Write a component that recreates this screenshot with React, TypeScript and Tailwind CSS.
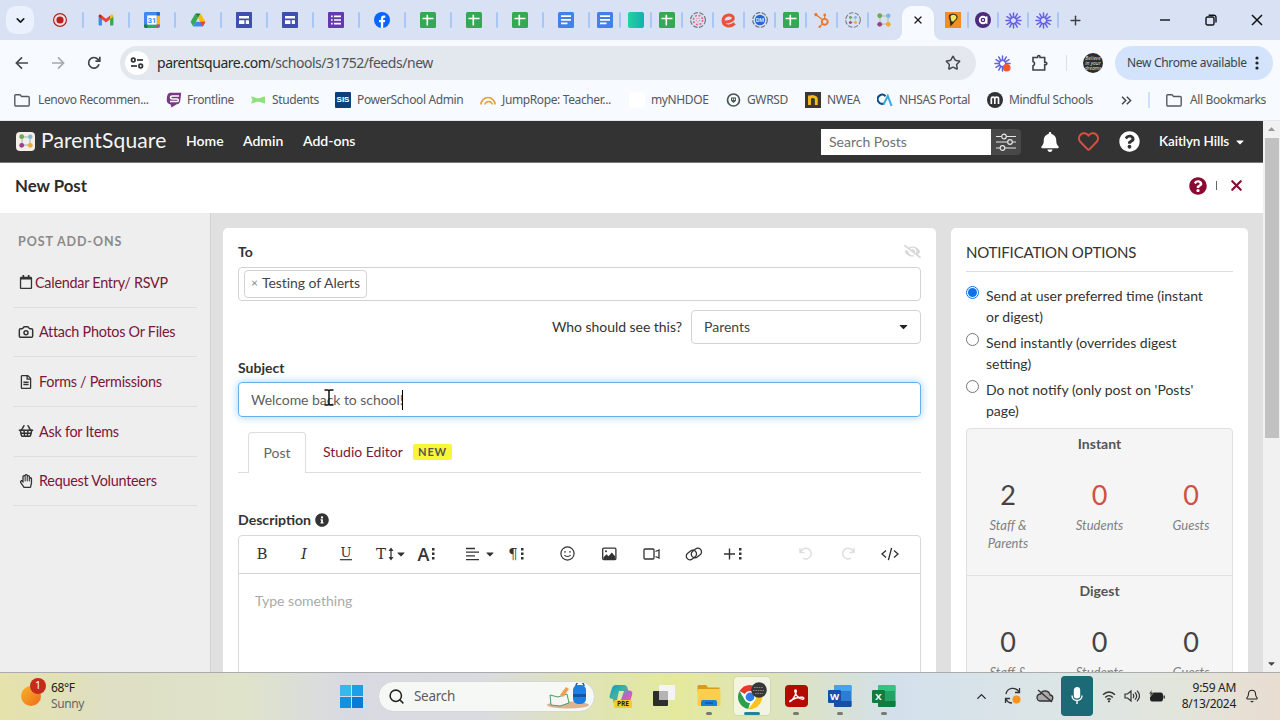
import type { ReactNode } from "react";
import { Bell, Camera, ChevronDown, ChevronUp, Plus, Search, ShoppingBasket, Star, X } from "lucide-react";
import {
  FaBell,
  FaCaretDown,
  FaEyeSlash,
  FaInfoCircle,
  FaQuestionCircle,
  FaRegCalendar,
  FaRegFileAlt,
  FaRegHandPaper,
  FaRegHeart,
} from "react-icons/fa";
import { SiHubspot } from "react-icons/si";

const segoe = "font-['Noto_Sans','Open_Sans',sans-serif]";
const proxima = "font-['Lato','Open_Sans',sans-serif]";

/* ---------- Favicons ---------- */

const Sheets = () => (
  <svg width="16" height="16" viewBox="0 0 16 16">
    <rect width="16" height="16" rx="1.5" fill="#34a853" />
    <path d="M2.5 6.5h11M7.3 2.8v10.6" stroke="#fff" strokeWidth="1.6" />
  </svg>
);

const Docs = () => (
  <svg width="16" height="16" viewBox="0 0 16 16">
    <rect width="16" height="16" rx="1.5" fill="#4381ea" />
    <path d="M3 4.2h10M3 7.8h10M3 11.4h6.5" stroke="#fff" strokeWidth="1.7" />
  </svg>
);

const Sites = () => (
  <svg width="16" height="16" viewBox="0 0 16 16">
    <rect width="16" height="16" rx="1" fill="#3f4fae" />
    <path d="M3 4h10v2.6H3zM3 8.2h5.4V12H3zM9.8 8.2H13V12H9.8z" fill="#fff" />
  </svg>
);

const Forms = () => (
  <svg width="16" height="16" viewBox="0 0 16 16">
    <rect width="16" height="16" rx="1" fill="#6638b0" />
    <path d="M6 4.4h7M6 8h7M6 11.6h7" stroke="#fff" strokeWidth="1.7" />
    <path d="M3 4.4h1.7M3 8h1.7M3 11.6h1.7" stroke="#fff" strokeWidth="1.7" />
  </svg>
);

const Record = () => (
  <svg width="16" height="16" viewBox="0 0 16 16">
    <circle cx="8" cy="8" r="6.4" fill="#f3dfe4" stroke="#b3261e" strokeWidth="1.2" />
    <circle cx="8" cy="8" r="3.6" fill="#b81f1f" />
  </svg>
);

const Gmail = () => (
  <svg width="16" height="16" viewBox="0 0 16 16">
    <path d="M.6 4.2v8.3c0 .6.4 1 1 1h2.3V7z" fill="#4285f4" />
    <path d="M15.4 4.2v8.3c0 .6-.4 1-1 1h-2.3V7z" fill="#34a853" />
    <path d="M.6 4.6 3.9 7.2V3.6l-.9-.7C1.9 2.1.6 2.9.6 4.2z" fill="#c5221f" />
    <path d="M15.4 4.6 12.1 7.2V3.6l.9-.7c1.1-.8 2.4 0 2.4 1.3z" fill="#fbbc04" />
    <path d="M3.9 3.6 8 6.7l4.1-3.1v3.7L8 10.4 3.9 7.3z" fill="#ea4335" />
  </svg>
);

const GoogleCalendar = () => (
  <svg width="16" height="16" viewBox="0 0 16 16">
    <rect width="16" height="16" rx="1.4" fill="#4285f4" />
    <path d="M12.6 3.4H16v9.2h-3.4z" fill="#fbbc04" />
    <path d="M12.6 0H14.6A1.4 1.4 0 0 1 16 1.4v2h-3.4z" fill="#1967d2" />
    <path d="M3.4 12.6h9.2V16H3.4z" fill="#34a853" />
    <path d="M0 12.6h3.4V16h-2A1.4 1.4 0 0 1 0 14.6z" fill="#188038" />
    <path d="M12.6 16v-3.4H16z" fill="#ea4335" />
    <rect x="3.2" y="3.4" width="9.4" height="9.2" fill="#fff" />
    <text x="8" y="10.9" textAnchor="middle" fontSize="7.5" fontWeight="700" fill="#4285f4" fontFamily="Roboto, sans-serif">
      31
    </text>
  </svg>
);

const Drive = () => (
  <svg width="16" height="16" viewBox="0 0 16 16">
    <path d="M5.4 1.4h5.2L8 5.9z" fill="#188038" />
    <path d="M5.4 1.4 8 5.9 3.2 14.4.6 9.8z" fill="#34a853" />
    <path d="M10.6 1.4 15.4 9.8h-5.2L8 5.9z" fill="#fbbc04" />
    <path d="M5.8 9.8h9.6l-2.6 4.6H3.2z" fill="#4285f4" />
    <path d="M10.2 9.8h5.2l-2.6 4.6z" fill="#ea4335" />
  </svg>
);

const Facebook = () => (
  <svg width="16" height="16" viewBox="0 0 16 16">
    <circle cx="8" cy="8" r="8" fill="#0866ff" />
    <path d="M6.9 15.9V10.3H5V8h1.9V6.7c0-2.2 1-3.2 3-3.2.5 0 1.1.1 1.4.2v2h-.9c-.9 0-1.2.4-1.2 1.2V8h2l-.4 2.3H9.2v5.5z" fill="#fff" />
  </svg>
);

const Teal = () => <span className="size-4 rounded-[2px] bg-linear-to-r from-[#25d0a0] to-[#14b0ae]" />;

const Canvas = () => (
  <svg width="16" height="16" viewBox="0 0 16 16" fill="none">
    <circle cx="8" cy="8" r="7.4" stroke="#70747c" strokeWidth="1.2" strokeDasharray="4.5 1.5" />
    <circle cx="8" cy="8" r="4.6" stroke="#e0687c" strokeWidth="1.6" strokeDasharray="2 1.6" />
    <circle cx="8" cy="8" r="1.8" stroke="#e58a98" strokeWidth="1.2" strokeDasharray="1 1" />
  </svg>
);

const Eduphoria = () => (
  <svg width="16" height="16" viewBox="0 0 16 16" fill="none">
    <path d="M2.5 9.8c5 .6 9.8-1 9.8-3.8 0-4-9.5-4.8-10.2 2.5-.4 5.8 7 7 11.6 3" stroke="#e8543a" strokeWidth="3" />
  </svg>
);

const BlueDm = () => (
  <svg width="16" height="16" viewBox="0 0 16 16">
    <circle cx="8" cy="8" r="7.3" fill="none" stroke="#6b7280" strokeWidth="1.2" strokeDasharray="4.5 1.5" />
    <circle cx="8" cy="8" r="5.2" fill="#2766d8" />
    <text x="8" y="10" textAnchor="middle" fontSize="5.5" fontWeight="700" fill="#cfe0ff" fontFamily="Roboto, sans-serif">
      DM
    </text>
  </svg>
);

const SquareDots = ({ ring = false, size = 16 }: { ring?: boolean; size?: number }) => (
  <svg width={size} height={size} viewBox="0 0 16 16">
    {ring && <circle cx="8" cy="8" r="7.3" fill="none" stroke="#777b82" strokeWidth="1.1" strokeDasharray="4.5 1.5" />}
    <g transform={ring ? "translate(3.2 3.2) scale(.6)" : "translate(0 0)"}>
      <path d="M4 4h8v8H4z" fill="none" stroke="#b8c7c4" strokeWidth="1.5" />
      <circle cx="3.7" cy="3.7" r="2.4" fill="#6ea84f" />
      <circle cx="12.3" cy="3.7" r="2.2" fill="#7eb6d9" />
      <circle cx="3.7" cy="12.3" r="2.4" fill="#9c3f86" />
      <circle cx="12.3" cy="12.3" r="2.4" fill="#efac2c" />
    </g>
  </svg>
);

const Bulb = () => (
  <svg width="16" height="16" viewBox="0 0 16 16">
    <rect width="16" height="16" fill="#ef8e22" />
    <path d="M4.5 2.5C8 .8 13 2 12.6 5.8 12.3 8 9.5 8.7 8.7 11L5.5 14.5 5 11C5.5 8 2.5 5 4.5 2.5z" fill="#33321c" />
    <path d="M6 3.4c2.5-1.2 5.6-.4 5.400 2.400C11.200 7.700 9 8 8.200 9.800L6.300 9C6.500 7 4.600 5 6 3.400z" fill="#f0e36a" />
  </svg>
);

const PurpleA = () => (
  <svg width="16" height="16" viewBox="0 0 16 16" fill="none">
    <circle cx="8" cy="8" r="8" fill="#4c2a7c" />
    <circle cx="8" cy="8" r="3.3" stroke="#fff" strokeWidth="1.9" />
    <path d="M11.6 4.4v7.4" stroke="#fff" strokeWidth="1.8" />
    <circle cx="8" cy="8" r="1" fill="#fff" />
  </svg>
);

const Loom = ({ dot = false }: { dot?: boolean }) => (
  <svg width="17" height="17" viewBox="0 0 16 16" fill="none">
    <g stroke="#6560e4" strokeWidth="1.4" strokeLinecap="round">
      {[0, 30, 60, 90, 120, 150, 180, 210, 240, 270, 300, 330].map((a) => (
        <path key={a} d="M8 4.8V.9" transform={`rotate(${a} 8 8)`} />
      ))}
    </g>
    <circle cx="8" cy="8" r="3" stroke="#6560e4" strokeWidth="1.3" />
    {dot && <circle cx="12" cy="12" r="3.6" fill="#f8542f" />}
  </svg>
);

/* ---------- Browser tabs ---------- */

const pinnedTabs: ReactNode[] = [
  <Record />, <Gmail />, <GoogleCalendar />, <Drive />, <Sites />, <Sites />,
  <Forms />, <Facebook />, <Sheets />, <Sheets />, <Sheets />, <Docs />,
];

const narrowTabs: ReactNode[] = [
  <Docs />, <Teal />, <Sheets />, <Canvas />, <Eduphoria />, <BlueDm />, <Sheets />,
  <SiHubspot size={15} color="#e5792f" />, <SquareDots ring />, <SquareDots />,
];

const trailingTabs: ReactNode[] = [<Bulb />, <PurpleA />, <Loom />, <Loom />];

function Tab({ width, divider = true, children }: { width: string; divider?: boolean; children: ReactNode }) {
  return (
    <div className={`relative flex h-full shrink-0 items-center justify-center ${width}`}>
      {children}
      {divider && <span className="absolute -right-px top-3 h-4 w-[2px] rounded bg-[#a9c7f6]" />}
    </div>
  );
}

function TabStrip() {
  return (
    <div className="flex h-10 items-center bg-[#d8e2f4] text-[#1c1c1e]">
      <div className="ml-[6px] mr-[3px] flex size-7 items-center justify-center rounded-[10px] bg-[#eaf0fc]">
        <ChevronDown size={13} strokeWidth={3} />
      </div>
      {pinnedTabs.map((icon, i) => (
        <Tab key={i} width="w-[46px]">{icon}</Tab>
      ))}
      {narrowTabs.map((icon, i) => (
        <Tab key={i} width="w-[31px]" divider={i < narrowTabs.length - 1}>{icon}</Tab>
      ))}
      <div className="relative ml-[3px] mr-1 flex h-[34px] w-8 items-center justify-center self-end rounded-t-[10px] bg-[#f7fafe]">
        <X size={12} strokeWidth={2.6} className="-mt-[6px]" />
        <svg className="absolute -left-2 bottom-0" width="8" height="8"><path d="M8 0v8H0a8 8 0 0 0 8-8z" fill="#f7fafe" /></svg>
        <svg className="absolute -right-2 bottom-0" width="8" height="8"><path d="M0 0v8h8a8 8 0 0 1-8-8z" fill="#f7fafe" /></svg>
      </div>
      {trailingTabs.map((icon, i) => (
        <Tab key={i} width="w-[30px]">{icon}</Tab>
      ))}
      <Plus size={15} strokeWidth={2.3} className="ml-[10px] text-[#3c3f45]" />
      <div className="ml-auto mr-[17px] flex items-center">
        <svg width="12" height="12"><path d="M1 6h10" stroke="#111" strokeWidth="1.4" /></svg>
        <svg className="ml-[34px]" width="12" height="12" fill="none" stroke="#111" strokeWidth="1.4">
          <rect x="1" y="3" width="8" height="8" rx="1.6" />
          <path d="M3.6 1.2h5.2a2.2 2.2 0 0 1 2.2 2.2v5" />
        </svg>
        <svg className="ml-[34px]" width="12" height="12"><path d="m1 1 10 10M11 1 1 11" stroke="#111" strokeWidth="1.5" /></svg>
      </div>
    </div>
  );
}

/* ---------- Address bar ---------- */

function Toolbar() {
  return (
    <div className="flex h-10 items-start bg-[#f7fafe] pt-[6px]">
      <div className="flex h-[34px] w-[120px] shrink-0 items-center pl-[15px]">
        <svg width="14" height="14" fill="none" stroke="#45484c" strokeWidth="1.7"><path d="M13 7H1.6M7 1.4 1.4 7 7 12.6" /></svg>
        <svg className="ml-[22px]" width="14" height="14" fill="none" stroke="#a5a8ac" strokeWidth="1.6"><path d="M1 7h11.4M7 1.4 12.6 7 7 12.6" /></svg>
        <svg className="ml-[22px]" width="14" height="14" fill="none" stroke="#3f4246" strokeWidth="1.7">
          <path d="M12 8.3A5.3 5.3 0 1 1 11 3.4L12.6 5" />
          <path d="M12.8.8v4.4H8.4" />
        </svg>
      </div>
      <div className="flex h-[34px] w-[856px] shrink-0 items-center rounded-full bg-[#e3e8ee] pl-[5px]">
        <span className="flex size-6 items-center justify-center rounded-full bg-white">
          <svg width="14" height="12" fill="none" stroke="#303236" strokeWidth="1.7">
            <circle cx="3.3" cy="3" r="1.8" /><path d="M7 3h6" />
            <circle cx="10.7" cy="9" r="1.8" /><path d="M1 9h6" />
          </svg>
        </span>
        <span className="-mt-[2px] ml-2 text-[14px] tracking-[-0.46px] text-[#505357]">
          <span className="text-[#26282b]">parentsquare.com</span>/schools/31752/feeds/new
        </span>
        <Star size={16} strokeWidth={2.2} className="ml-auto mr-[15px] text-[#45484c]" />
      </div>
      <div className="flex h-[34px] items-center">
        <span className="ml-[18px]"><Loom dot /></span>
        <svg className="ml-[20px]" width="18" height="18" fill="none" stroke="#3f4246" strokeWidth="1.6">
          <path d="M2 3.5h4.6V2.7a1.2 1.2 0 0 1 2.4 0v.8h4.7v4.7h.9a1.2 1.2 0 0 1 0 2.4h-.9V16H2v-4.2a2.2 2.2 0 0 0 0-4.2z" />
        </svg>
        <span className="ml-[17px] h-4 w-px bg-[#d7e3f5]" />
        <span className="ml-4 flex size-5 flex-col items-center justify-center overflow-hidden rounded-full bg-[#2d2d2d] text-[5px] leading-[5px] text-[#ddd]">
          <i>Believe</i><i>in your</i><i>dreams</i>
        </span>
        <div className="ml-3 flex h-[34px] w-[158px] items-center rounded-full bg-[#d3e3fc] pl-3 text-[12px] tracking-[-0.32px] text-[#3a4250]">
          <span className="whitespace-nowrap">New Chrome available</span>
          <svg className="ml-auto mr-[14px]" width="4" height="14" fill="#1f2328">
            <circle cx="2" cy="2" r="1.6" /><circle cx="2" cy="7" r="1.6" /><circle cx="2" cy="12" r="1.6" />
          </svg>
        </div>
      </div>
    </div>
  );
}

/* ---------- Bookmarks ---------- */

const FolderOutline = () => (
  <svg width="16" height="13" viewBox="0 0 16 13" fill="none" stroke="#56595d" strokeWidth="1.4">
    <path d="M.8 11V1.8a1 1 0 0 1 1-1H6l1.6 1.7h6.6a1 1 0 0 1 1 1V11a1 1 0 0 1-1 1H1.8a1 1 0 0 1-1-1z" />
  </svg>
);

const bookmarks: { label: string; width: string; icon: ReactNode }[] = [
  { label: "Lenovo Recommen...", width: "w-[152px] gap-2", icon: <FolderOutline /> },
  {
    label: "Frontline",
    width: "w-[84px] gap-[5px]",
    icon: (
      <svg width="16" height="16" viewBox="0 0 16 16">
        <path d="M4 .8h11.2L14.2 9c-.3 2-1.5 3-3.4 3.3L5.5 15.5 4.6 12.5C1.5 12 .5 10 .8 7 1 3 2 1 4 .8z" fill="#7a3a83" />
        <path d="M13 4H6.5c-2.6 0-2.6 3 0 3H11c2 0 1.8 2.6-.4 2.6H4" stroke="#fff" strokeWidth="1.5" fill="none" />
      </svg>
    ),
  },
  {
    label: "Students",
    width: "w-[85px] gap-[6px]",
    icon: (
      <svg width="16" height="16" viewBox="0 0 16 16">
        <path d="M1 4.5c3 .2 4 1.7 7 1.7s4-1.5 7-1.7v7c-3-.2-4-1.7-7-1.7s-4 1.5-7 1.7l1.5-3.5z" fill="#8de07c" />
      </svg>
    ),
  },
  {
    label: "PowerSchool Admin",
    width: "w-[145px] gap-[6px]",
    icon: <span className="flex size-4 items-center justify-center rounded-[1px] bg-[#0d4078] font-['Liberation_Sans',sans-serif] text-[8px] font-bold tracking-normal text-white">SIS</span>,
  },
  {
    label: "JumpRope: Teacher...",
    width: "w-[149px] gap-[6px]",
    icon: (
      <svg width="16" height="16" viewBox="0 0 16 16" fill="none" stroke="#e3a13c">
        <path d="M1 12.5a7 7 0 0 1 14 0" strokeWidth="1.7" /><path d="M4.5 12.5c2-4 6.5-4 8 0" strokeWidth="1.3" />
      </svg>
    ),
  },
  { label: "myNHDOE", width: "w-[97px] gap-[6px]", icon: <span className="size-4 rounded bg-white" /> },
  {
    label: "GWRSD",
    width: "w-[79px] gap-[6px]",
    icon: (
      <svg width="15" height="16" viewBox="0 0 15 16" fill="none">
        <circle cx="7.5" cy="8" r="6" stroke="#46574f" strokeWidth="1.7" />
        <path d="M5 5.5h5v3.3L7.5 11 5 8.800z" fill="#46574f" /><circle cx="6.6" cy="7.3" r=".7" fill="#fff" /><circle cx="8.5" cy="7.3" r=".7" fill="#fff" />
      </svg>
    ),
  },
  {
    label: "NWEA",
    width: "w-[72px] gap-[6px]",
    icon: (
      <svg width="16" height="16" viewBox="0 0 16 16">
        <rect width="16" height="16" fill="#3a3733" />
        <path d="M4.5 13V3.5M4.5 6.5c1-2.8 6.8-2.6 6.8 1V13" stroke="#f5b91e" strokeWidth="2.9" fill="none" />
      </svg>
    ),
  },
  {
    label: "NHSAS Portal",
    width: "w-[110px] gap-[6px]",
    icon: (
      <svg width="16" height="16" viewBox="0 0 16 16" fill="none" strokeWidth="2">
        <path d="M8.5 4.2A4.5 4.5 0 1 0 7 11.4" stroke="#0c4c86" /><path d="M6.5 12.5 10.8 4l3.8 10" stroke="#38a9dc" />
      </svg>
    ),
  },
  {
    label: "Mindful Schools",
    width: "w-[134px] gap-[6px]",
    icon: (
      <svg width="16" height="16" viewBox="0 0 16 16" fill="none">
        <circle cx="8" cy="8" r="8" fill="#313235" />
        <path d="M4.3 12V6.5c0-1.8 3.5-1.8 3.5 0V12m0-5.5c0-1.8 3.7-1.8 3.7 0V12" stroke="#fff" strokeWidth="1.7" />
      </svg>
    ),
  },
];

function BookmarksBar() {
  return (
    <div className="flex h-[41px] items-center border-b border-[#e4e8ec] bg-[#f7fafe] pl-[14px] text-[12px] tracking-[-0.38px] text-[#55585c]">
      {bookmarks.map((b) => (
        <div key={b.label} className={`flex shrink-0 items-center whitespace-nowrap ${b.width}`}>
          {b.icon}
          <span>{b.label}</span>
        </div>
      ))}
      <svg width="11" height="9" fill="none" stroke="#45484c" strokeWidth="1.5"><path d="m1 .8 3.8 3.7L1 8.2M5.8.8l3.800 3.700-3.800 3.700" /></svg>
      <span className="ml-[16px] h-4 w-[2px] bg-[#d0e0fa]" />
      <div className="ml-4 flex items-center gap-2 whitespace-nowrap"><FolderOutline /><span>All Bookmarks</span></div>
    </div>
  );
}

/* ---------- ParentSquare header ---------- */

function SiteHeader() {
  return (
    <div className="flex h-[42px] shrink-0 items-center border-b border-[#777] bg-[#333] text-white">
      <span className="-mt-px ml-4 flex size-[19px] items-center justify-center rounded-[4px] bg-[#f4efe8]"><SquareDots size={16} /></span>
      <span className="-mt-[3px] ml-[6px] w-[127px] whitespace-nowrap text-[21px] tracking-[0.15px] text-[#f5f5f5]">ParentSquare</span>
      <nav className="-mt-[2px] ml-[18px] flex items-center text-[14px] font-semibold">
        <span className="w-[57px]">Home</span>
        <span className="w-[60px]">Admin</span>
        <span>Add-ons</span>
      </nav>
      <div className="ml-auto flex h-[26px] w-[200px]">
        <div className="flex w-[170px] items-center bg-white pl-2 text-[14px] text-[#707070]">Search Posts</div>
        <div className="flex w-[30px] items-center justify-center rounded-r bg-[#484848]">
          <svg width="20" height="18" fill="none" stroke="#e6e6e6" strokeWidth="1.2">
            <path d="M0 3.5h5.5M10.5 3.5H20M0 9h11.5M16.5 9H20M0 15h4M9 15h11" />
            <circle cx="8" cy="3.5" r="2.3" /><circle cx="14" cy="9" r="2.3" /><circle cx="6.5" cy="15" r="2.3" />
          </svg>
        </div>
      </div>
      <FaBell size={20} className="ml-[19px]" />
      <FaRegHeart size={21} className="ml-[18px] text-[#d9503f]" />
      <FaQuestionCircle size={21} className="ml-[20px]" />
      <span className="-mt-px ml-[19px] w-[71px] whitespace-nowrap text-[13.5px] font-semibold tracking-[-0.1px]">Kaitlyn Hills</span>
      <FaCaretDown size={12} className="ml-[4px] mr-[17px]" />
    </div>
  );
}

/* ---------- Post form ---------- */

const addOns: { label: string; icon: ReactNode; gap: string }[] = [
  { label: "Calendar Entry/ RSVP", icon: <FaRegCalendar size={14} />, gap: "gap-[2px] pl-[6px]" },
  { label: "Attach Photos Or Files", icon: <Camera size={16} strokeWidth={2.2} />, gap: "gap-[5px] pl-[5px]" },
  { label: "Forms / Permissions", icon: <FaRegFileAlt size={14} className="mx-[1px]" />, gap: "gap-[5px] pl-[5px]" },
  { label: "Ask for Items", icon: <ShoppingBasket size={16} strokeWidth={2.2} />, gap: "gap-[5px] pl-[5px]" },
  { label: "Request Volunteers", icon: <FaRegHandPaper size={14} className="mx-[1px]" />, gap: "gap-[5px] pl-[5px]" },
];

function Sidebar() {
  return (
    <aside className="w-[211px] shrink-0 border-r border-[#d2d2d2] bg-[#eeeeee]">
      <h3 className="ml-[18px] mt-[19px] text-[12.5px] font-bold leading-5 tracking-[0.9px] text-[#8a8a8a]">POST ADD-ONS</h3>
      <ul className="ml-[13px] mt-[6px] w-[184px]">
        {addOns.map((a) => (
          <li key={a.label} className={`flex h-[49.7px] items-center whitespace-nowrap border-b border-[#dfdfdf] text-[14.4px] tracking-[-0.26px] text-[#7b1739] ${a.gap}`}>
            <span className="text-[#333]">{a.icon}</span>
            {a.label}
          </li>
        ))}
      </ul>
    </aside>
  );
}

const Dots = () => (
  <svg width="3" height="14" fill="#333"><path d="M0 1h2.5v2.5H0zM0 5.5h2.5V8H0zM0 10h2.5v2.5H0z" /></svg>
);

/* Slab-serif toolbar glyph, centred in a 14px box */
function Glyph({ char, className = "", italic = false, underline = false }: { char: string; className?: string; italic?: boolean; underline?: boolean }) {
  return (
    <svg width="14" height="16" className={className} overflow="visible">
      <text x="7" y={underline ? 11 : 13} textAnchor="middle" fontSize={underline ? 13 : 15} fontStyle={italic ? "italic" : "normal"} fill="#333" fontFamily="DejaVu Serif, serif">
        {char}
      </text>
      {underline && <path d="M1 13.7h12" stroke="#333" strokeWidth="1.2" />}
    </svg>
  );
}

function EditorToolbar() {
  return (
    <div className="flex h-[38px] items-center border-b border-[#d5d5d5] pb-[2px] text-[#333]">
      <Glyph char="B" className="ml-[16px]" />
      <Glyph char="I" italic className="ml-[28px]" />
      <Glyph char="U" underline className="ml-[28px]" />
      <Glyph char="T" className="ml-[21px]" />
      <svg width="6" height="14"><path d="M3 3v8" stroke="#333" strokeWidth="1.3" /><path d="M3 .5 5.5 4h-5zM3 13.5 5.5 10h-5z" fill="#333" /></svg>
      <FaCaretDown size={12} className="ml-px" />
      <span className="ml-[10px] w-[13px] text-center font-['Open_Sans',sans-serif] text-[18px] font-semibold leading-none">A</span>
      <span className="ml-[2px]"><Dots /></span>
      <svg className="ml-[31px]" width="14" height="14" stroke="#333" strokeWidth="1.3"><path d="M0 1.5h9M0 5.2h13M0 8.9h9M0 12.6h13" /></svg>
      <FaCaretDown size={12} className="ml-[4px]" />
      <Glyph char="¶" className="ml-[10px]" />
      <span className="ml-px"><Dots /></span>
      <svg className="ml-[36px]" width="15" height="15" fill="none" stroke="#333" strokeWidth="1.2">
        <circle cx="7.5" cy="7.5" r="6.6" /><path d="M4.5 9c1.2 2 4.8 2 6 0M5 5v1.8M10 5v1.8" />
      </svg>
      <svg className="ml-[27px]" width="15" height="14">
        <rect x=".7" y="1.2" width="13.2" height="11.4" rx="1" fill="none" stroke="#333" strokeWidth="1.3" />
        <path d="M1.5 12V10.2l3-3 2 2L9.8 5.6 13.3 9.6V12z" fill="#333" /><circle cx="4" cy="4.3" r="1" fill="#333" />
      </svg>
      <svg className="ml-[26px]" width="17" height="14" fill="none" stroke="#333" strokeWidth="1.3">
        <rect x="1" y="2" width="10" height="10" rx="1" /><path d="M12.5 4.5 16 3v8l-3.500-1.500" />
      </svg>
      <svg className="ml-[25px]" width="18" height="14" fill="none" stroke="#333" strokeWidth="1.3">
        <rect x="-5.5" y="-3.7" width="11" height="7.4" rx="3.7" transform="translate(6.4 8) rotate(-38)" />
        <rect x="-5.5" y="-3.7" width="11" height="7.4" rx="3.7" transform="translate(11.4 6) rotate(-38)" />
      </svg>
      <svg className="ml-[21px]" width="12" height="12" stroke="#333" strokeWidth="1.4"><path d="M0 6h11M5.5.5v11" /></svg>
      <span className="ml-[3px]"><Dots /></span>
      <svg className="ml-[57px]" width="14" height="13" fill="none" stroke="#dedede" strokeWidth="1.5"><path d="M1 1v4.5h4.5M1.6 5.2a5.4 5.4 0 1 1 2.4 6" /></svg>
      <svg className="ml-[28px]" width="14" height="13" fill="none" stroke="#dedede" strokeWidth="1.5"><path d="M13 1v4.5H8.5M12.4 5.2a5.4 5.4 0 1 0-2.4 6" /></svg>
      <svg className="ml-[26px]" width="18" height="14" fill="none" stroke="#333" strokeWidth="1.4"><path d="M5 3.5 1 7l4 3.5M13 3.5 17 7l-4 3.5M10.6.8 7.4 13.2" /></svg>
    </div>
  );
}

function PostForm() {
  return (
    <main className="ml-3 mt-[15px] w-[713px] shrink-0 rounded-t-[5px] bg-white px-[15px] text-[14px] text-[#444]">
      <div className="flex h-[39px] items-center justify-between pt-[7px]">
        <label className="text-[14px] font-bold text-[#333]">To</label>
        <FaEyeSlash size={17} className="text-[#d9d9d9]" />
      </div>
      <div className="flex h-[34px] items-center rounded border border-[#d3d3d3] pl-[5px]">
        <span className="flex h-[28px] w-[123px] items-center whitespace-nowrap rounded border border-[#d3d3d3] pb-[3px] pl-[6px] text-[14px] tracking-[-0.05px]">
          <span className="mr-[4px] text-[12px] text-[#888]">×</span>Testing of Alerts
        </span>
      </div>
      <div className="mt-[9px] flex items-center justify-end">
        <span className="mr-[9px] pb-[2px] tracking-[-0.04px] text-[#333]">Who should see this?</span>
        <div className="flex h-[34px] w-[230px] items-center justify-between rounded border border-[#d3d3d3] pb-[2px] pl-3 pr-[10px]">
          Parents
          <FaCaretDown size={13} className="text-[#222]" />
        </div>
      </div>
      <label className="mt-[14px] block text-[14px] font-bold leading-5 text-[#333]">Subject</label>
      <div className="relative mt-[4px] flex h-[35px] items-center rounded border border-[#66afe9] pl-3 tracking-[-0.05px] text-[#606060] shadow-[0_0_8px_rgba(102,175,233,0.6)]">
        Welcome back to school!
        <span className="-ml-px h-5 w-px bg-black" />
        <svg className="absolute left-[85px] top-[6px]" width="10" height="17" fill="none" stroke="#111" strokeWidth="1.5">
          <path d="M.5 1H4l1 .8L6 1h3.5M5 1.8v13.4M.5 16H4l1-.8 1 .8h3.5" />
        </svg>
      </div>
      <div className="mt-[15px] flex h-[41px] border-b border-[#ddd] pl-[10px]">
        <div className="flex h-[41px] w-[58px] items-center justify-center rounded-t border border-b-0 border-[#ddd] bg-white pb-[2px] text-[#666]">Post</div>
        <div className="ml-[17px] flex items-center gap-[11px] text-[#7b1739]">
          <span className="w-[79px] whitespace-nowrap pb-px">Studio Editor</span>
          <span className="flex h-4 w-[39px] items-center justify-center rounded-[2px] bg-[#f9f637] text-[11px] font-bold tracking-[0.8px] text-[#555]">NEW</span>
        </div>
      </div>
      <div className="mt-[37px] flex h-5 items-center gap-[4px] text-[#333]">
        <span className="text-[14.1px] font-bold">Description</span>
        <FaInfoCircle size={14} className="-mt-px" />
      </div>
      <div className="mt-[5px] h-40 rounded-t border border-[#d8d8d8]">
        <EditorToolbar />
        <div className="pl-4 pt-[17px] text-[14px] leading-5 text-[#aaa]">Type something</div>
      </div>
    </main>
  );
}

/* ---------- Notification panel ---------- */

const options = [
  { lines: ["Send at user preferred time (instant", "or digest)"], checked: true },
  { lines: ["Send instantly (overrides digest", "setting)"], checked: false },
  { lines: ["Do not notify (only post on 'Posts'", "page)"], checked: false },
];

const groups = [
  { title: "Instant", counts: [{ n: 2, label: "Staff & Parents", zero: false }, { n: 0, label: "Students", zero: true }, { n: 0, label: "Guests", zero: true }] },
  { title: "Digest", counts: [{ n: 0, label: "Staff & Parents", zero: false }, { n: 0, label: "Students", zero: false }, { n: 0, label: "Guests", zero: false }] },
];

function NotificationPanel() {
  return (
    <section className="ml-[15px] mt-[15px] w-[297px] shrink-0 rounded-t-[5px] bg-white px-[15px] pt-[14px] text-[#333]">
      <h2 className="border-b border-[#ddd] pb-[8px] text-[15px] leading-[21px] tracking-[-0.18px]">NOTIFICATION OPTIONS</h2>
      <div className="mt-[13px]">
        {options.map((o) => (
          <div key={o.lines[0]} className="mb-[5px] flex">
            <span className={`mt-px flex size-[13px] shrink-0 items-center justify-center rounded-full border ${o.checked ? "border-[#0d72e8]" : "border-[#777]"}`}>
              {o.checked && <span className="size-[9px] rounded-full bg-[#0d72e8]" />}
            </span>
            <div className="ml-[7px] whitespace-nowrap text-[14px] leading-[21px]">
              {o.lines.map((line) => <div key={line}>{line}</div>)}
            </div>
          </div>
        ))}
      </div>
      <div className="mt-[7px] rounded-t border border-[#e0e0e0] bg-[#f5f5f5] text-[#555]">
        {groups.map((g) => (
          <div key={g.title} className="h-[147px] border-b border-[#e0e0e0] pt-[5px] text-center">
            <div className="text-[14px] font-bold leading-5">{g.title}</div>
            <div className="mt-[24px] flex justify-between px-[10px]">
              {g.counts.map((c) => (
                <div key={c.label} className="w-[62px]">
                  <div className={`text-[27px] leading-[34px] ${c.zero ? "text-[#cf5044]" : "text-[#444]"}`}>{c.n}</div>
                  <div className="mt-[4px] text-[13px] italic leading-[18px] text-[#808080]">{c.label}</div>
                </div>
              ))}
            </div>
          </div>
        ))}
      </div>
    </section>
  );
}

function Page() {
  return (
    <div className={`flex h-[551px] bg-[#f1f1f1] ${proxima}`}>
      <div className="flex w-[1263px] flex-col overflow-hidden">
        <SiteHeader />
        <div className="flex h-[50px] shrink-0 items-center bg-white pb-[5px] pl-[15px] pr-[18px]">
          <h1 className="text-[16.8px] font-bold text-[#2b2b2b]">New Post</h1>
          <FaQuestionCircle size={18} className="ml-auto text-[#8a0a33]" />
          <span className="mx-[9px] h-[9px] w-px bg-[#666]" />
          <X size={17} strokeWidth={3} className="ml-[2px] text-[#8a0a33]" />
        </div>
        <div className="flex min-h-0 flex-1 overflow-hidden bg-[#e0e0e0]">
          <Sidebar />
          <PostForm />
          <NotificationPanel />
        </div>
      </div>
      <div className="flex flex-1 flex-col items-center">
        <FaCaretDown size={11} className="mt-[3px] rotate-180 text-[#999]" />
        <div className="mt-[3px] h-[300px] w-[14px] bg-[#c1c1c1]" />
        <FaCaretDown size={11} className="mb-[3px] mt-auto text-[#444]" />
      </div>
    </div>
  );
}

/* ---------- Taskbar ---------- */

function AppSlot({ running = false, active = false, children }: { running?: boolean; active?: boolean; children: ReactNode }) {
  return (
    <div className={`relative flex h-[38px] w-[36px] items-center justify-center rounded ${active ? "bg-white/60 ring-1 ring-black/5" : ""}`}>
      {children}
      {running && <span className={`absolute h-[3px] rounded-full ${active ? "bottom-0 w-4 bg-[#2a8291]" : "bottom-0 w-[6px] bg-[#777a70]"}`} />}
    </div>
  );
}

function OfficeIcon({ letter, dark, mid, light }: { letter: string; dark: string; mid: string; light: string }) {
  return (
    <svg width="24" height="23" viewBox="0 0 24 23">
      <rect x="6" y="0" width="17.5" height="22" rx="1.5" fill={mid} />
      <path d="M7.5 0H22a1.5 1.5 0 0 1 1.5 1.5V6H6V1.5A1.5 1.5 0 0 1 7.5 0z" fill={light} />
      <path d="M6 16h17.5v4.5A1.5 1.5 0 0 1 22 22H7.5A1.5 1.5 0 0 1 6 20.5z" fill={dark} />
      <rect x="0" y="5" width="13" height="13" rx="1.3" fill={dark} />
      <text x="6.5" y="15" textAnchor="middle" fontSize="9.5" fontWeight="700" fill="#fff" fontFamily="Open Sans, sans-serif">{letter}</text>
    </svg>
  );
}

function Taskbar() {
  return (
    <div className="flex h-12 items-center border-t border-[#a9abad] bg-[linear-gradient(90deg,#e6e2ab_0%,#dedfc5_9%,#dfe3ca_19%,#d8dae2_27%,#dadbe0_38%,#dfe4b4_46%,#e4e99d_53%,#dde3be_61%,#d3e0ec_70%,#dce5e6_82%,#e2e5db_92%,#e9dcd1_100%)] pb-px">
      <div className="relative ml-[21px] w-[30px]">
        <div className="size-5 rounded-full bg-linear-to-br from-[#f7b32b] to-[#ec6a17]" />
        <span className="absolute left-[9px] top-[-8px] flex size-[16px] items-center justify-center rounded-full bg-[#c42b1c] text-[10.5px] text-white">1</span>
      </div>
      <div className="w-[289px] text-[12px] leading-4 tracking-[-0.4px]">
        <div className="text-[#222]">68°F</div>
        <div className="text-[#666]">Sunny</div>
      </div>
      <div className="grid size-[23px] grid-cols-2 gap-px">
        <span className="bg-[#38b6ee]" /><span className="bg-[#1ba0e6]" /><span className="bg-[#1590dd]" /><span className="bg-[#0a7bd0]" />
      </div>
      <div className="ml-[15px] flex h-[31px] w-[217px] items-center rounded-full border border-[#d6d8d4] bg-[#f6f8f6] pl-[9px] text-[13.5px] tracking-[-0.3px] text-[#5c5c5c]">
        <Search size={17} strokeWidth={2.2} className="mr-[9px] text-[#222]" />
        Search
        <svg className="ml-auto mr-1" width="44" height="26" viewBox="0 0 44 26">
          <ellipse cx="22" cy="22" rx="21" ry="3.5" fill="#dcb28f" />
          <path d="m4 12 8 2 9-3 2 9-9 3-9-1z" fill="#f5f6f4" stroke="#4e9a6b" />
          <path d="m14 12 6-8 3 2-6 8z" fill="#f0a04b" />
          <path d="M30 3a4 4 0 0 1 8 0" fill="none" stroke="#1958b3" strokeWidth="1.5" />
          <rect x="27" y="2" width="13" height="19" rx="5" fill="#1c7ee0" /><path d="M27 11h13v3H27z" fill="#1252a8" />
        </svg>
      </div>
      <div className="ml-[8px] flex items-center gap-[7.8px]">
        <AppSlot>
          <svg width="24" height="24" viewBox="0 0 24 24">
            <defs><linearGradient id="cp" x2="1" y2="1"><stop stopColor="#1b8ee0" /><stop offset=".4" stopColor="#3ab796" /><stop offset=".65" stopColor="#c75bd6" /><stop offset="1" stopColor="#f07a4a" /></linearGradient></defs>
            <path d="M7 1h8c2 0 3 1 3.5 3l.7 2.5C23 6.5 24 8 23 11l-2 7c-.6 2-2 3-4 3H8c-2 0-3-1-3.5-3L4 15C1 15 0 13.5.8 11L3 4c.7-2 2-3 4-3z" fill="url(#cp)" />
            <path d="M10 7h5l-3 9H8z" fill="#e3ea9f" />
            <rect x="5" y="16" width="18" height="8" rx="1.5" fill="#f7c92f" />
            <text x="14" y="22.3" textAnchor="middle" fontSize="6.5" fontWeight="700" fill="#222" fontFamily="Open Sans, sans-serif">PRE</text>
          </svg>
        </AppSlot>
        <AppSlot>
          <svg width="24" height="24" viewBox="0 0 24 24"><rect x="0" y="7" width="15" height="15" rx="1" fill="#2d2d2d" /><rect x="6" y="1" width="16" height="15" rx="1" fill="#f4f4f4" /><path d="M6 7h9v9H6z" fill="#b4b4b4" /></svg>
        </AppSlot>
        <AppSlot running>
          <svg width="24" height="24" viewBox="0 0 24 24"><path d="M.5 2.5A1.5 1.5 0 0 1 2 1h7l2 2.5h11.5V8H.5z" fill="#d99a16" /><rect x=".5" y="5" width="23" height="17" rx="1.3" fill="#fbcf4d" /><path d="M4 22v-4a2 2 0 0 1 2-2h12a2 2 0 0 1 2 2v4z" fill="#1d7dd1" /><path d="M8 19h8" stroke="#0d5aa3" strokeWidth="1.5" /></svg>
        </AppSlot>
        <AppSlot running active>
          <svg width="30" height="28" viewBox="0 0 30 28">
            <circle cx="13" cy="15" r="12" fill="#fff" />
            <path d="M2.6 9a12 12 0 0 1 20.8 0H13a6 6 0 0 0-5.2 3z" fill="#e33b2e" />
            <path d="M2.6 9 7.8 18A6 6 0 0 0 13 21l-1.7 5.9A12 12 0 0 1 2.6 9z" fill="#2b9f4b" />
            <path d="M23.4 9A12 12 0 0 1 11.3 27L18.2 18A6 6 0 0 0 17 10.5L16 9z" fill="#fcc31e" />
            <circle cx="13" cy="15" r="5.5" fill="#fff" /><circle cx="13" cy="15" r="4.4" fill="#2f7de9" />
            <circle cx="22" cy="8" r="7.8" fill="#373737" /><path d="M17 5.5h9M16 8.5h11M18 11.5h8" stroke="#999" strokeWidth=".8" strokeDasharray="1.6 .8" />
          </svg>
        </AppSlot>
        <AppSlot running>
          <svg width="23" height="22" viewBox="0 0 23 22"><rect width="23" height="22" rx="4" fill="#b30b00" /><path d="M5 16.5c2-.5 6-6 6.3-10.5.1-1.5-1.7-1.5-1.5.2.5 4 4.5 8 8 8 1.5 0 1.3-1.7-.3-1.9-3.5-.4-8 .9-11.3 2.9C4.6 16.2 4.5 17 5 16.5z" fill="none" stroke="#fff" strokeWidth="1.4" /></svg>
        </AppSlot>
        <AppSlot running><OfficeIcon letter="W" dark="#174ea6" mid="#2b7cd3" light="#41a5ee" /></AppSlot>
        <AppSlot running><OfficeIcon letter="X" dark="#107c41" mid="#21a366" light="#33c481" /></AppSlot>
      </div>
      <div className="ml-auto mr-[21px] flex items-center text-[#222]">
        <ChevronUp size={15} strokeWidth={2} />
        <svg className="ml-[15px]" width="18" height="18" fill="none" stroke="#333" strokeWidth="1.3">
          <path d="M2 7a7 7 0 0 1 13-2M15.5 1v4.5H11M1.5 16v-4.5H6M2 12c1 2.5 3 4 6 4" /><circle cx="12.5" cy="12.5" r="4" fill="#f7941d" stroke="none" />
        </svg>
        <svg className="ml-[14px]" width="18" height="16" fill="none" stroke="#333" strokeWidth="1.3">
          <path d="M4.5 13h9a3 3 0 0 0 .5-6A5 5 0 0 0 4.5 6a3.5 3.5 0 0 0 0 7z" fill="#aaa" /><path d="m2 2 14 12" />
        </svg>
        <div className="ml-[7px] flex h-10 w-8 items-center justify-center rounded-[4px] bg-[#1b6a75]">
          <svg width="12" height="18" fill="none" stroke="#fff" strokeWidth="1.4"><rect x="3.5" y=".7" width="5" height="10" rx="2.5" fill="#fff" /><path d="M1 8.5c0 6.5 10 6.5 10 0M6 13.5V17" /></svg>
        </div>
        <svg className="ml-[9px]" width="14" height="13" fill="none" stroke="#333" strokeWidth="1.4"><path d="M1 4.8c3.6-3.8 8.4-3.8 12 0M3.2 7.4c2.3-2.4 5.3-2.4 7.6 0M5.2 9.6c1.1-1.1 2.5-1.1 3.6 0" /><circle cx="7" cy="11.3" r="1.1" fill="#333" stroke="none" /></svg>
        <svg className="ml-[8px]" width="16" height="14" fill="none" stroke="#333" strokeWidth="1.2"><path d="M1 5v4h2.5L7 12V2L3.5 5zM9 5c1 1.2 1 2.8 0 4M11 3.3c2 2.2 2 5.2 0 7.4M13 1.6c3 3.3 3 7.5 0 10.8" /></svg>
        <svg className="ml-[8px]" width="18" height="14"><rect x="2.5" y="4" width="12" height="8" rx="1.5" fill="#222" stroke="#222" /><path d="M15.5 6.5h1.3v3h-1.3z" fill="#222" /><path d="m4 .5-3 4.3h2L2 8l3.5-4.5h-2z" fill="#222" stroke="#e2e5db" strokeWidth=".5" /></svg>
        <div className="ml-[11px] w-[59px] whitespace-nowrap text-right text-[12px] leading-4 tracking-[-0.3px]">
          <div>9:59 AM</div>
          <div>8/13/2024</div>
        </div>
        <Bell size={14} strokeWidth={1.8} className="ml-[9px]" />
      </div>
    </div>
  );
}

export default function App() {
  return (
    <div className={`flex h-[720px] w-[1280px] flex-col overflow-hidden bg-white ${segoe}`}>
      <TabStrip />
      <Toolbar />
      <BookmarksBar />
      <Page />
      <Taskbar />
    </div>
  );
}
